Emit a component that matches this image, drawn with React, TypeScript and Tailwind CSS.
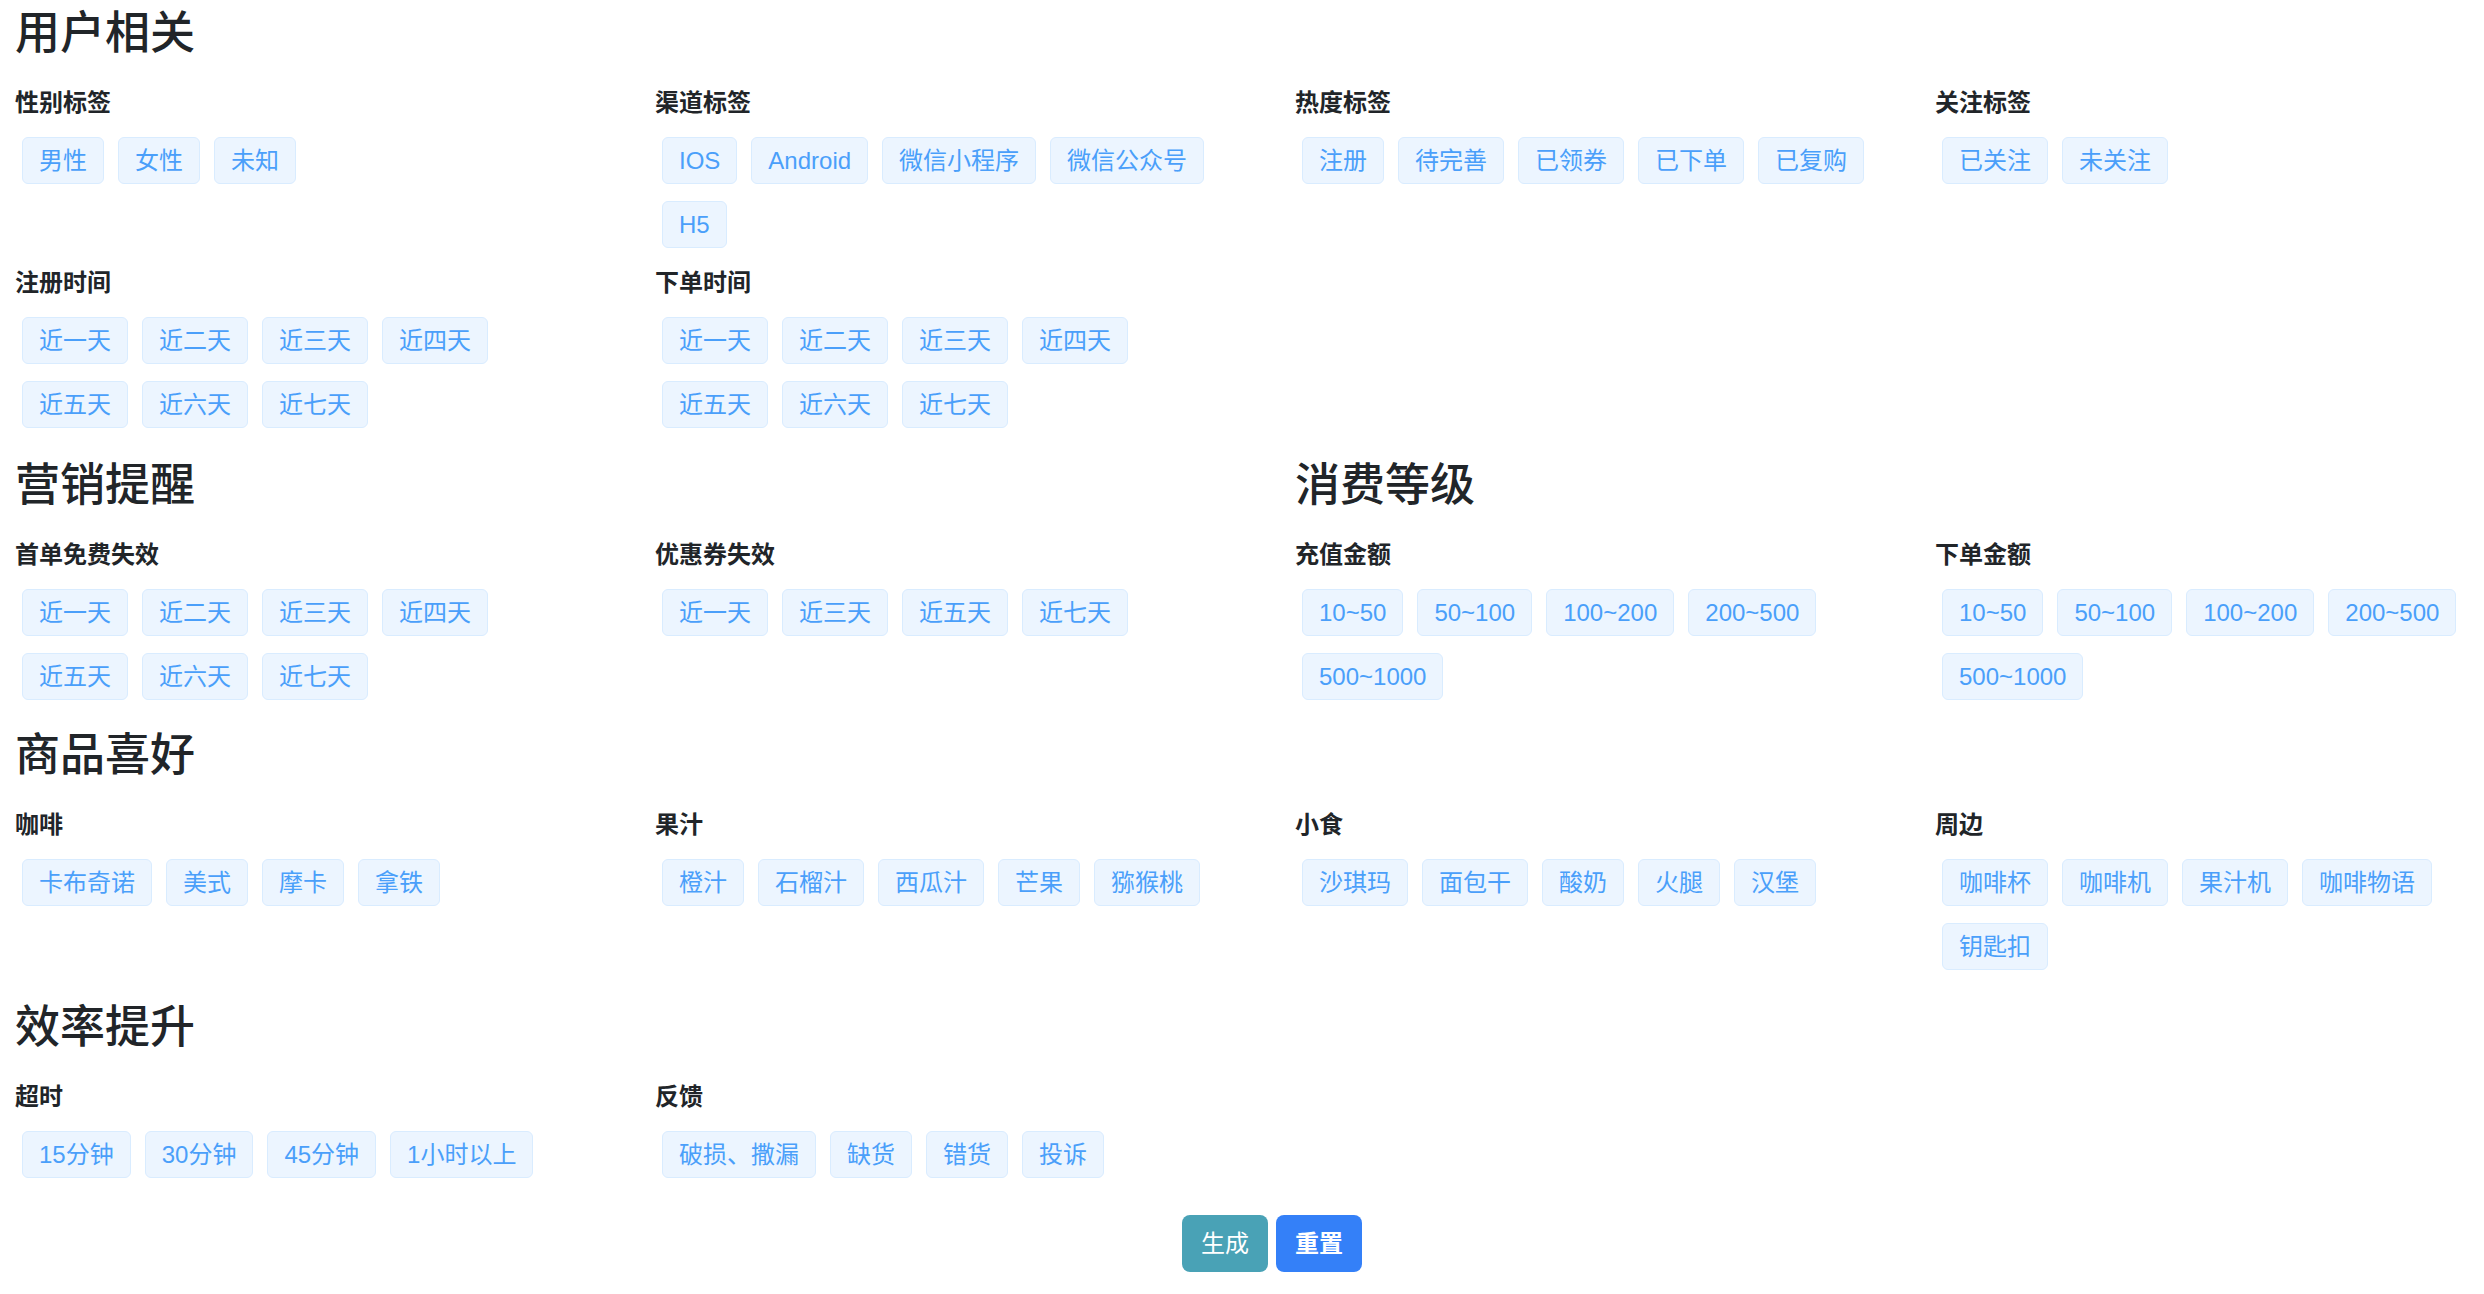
import React from "react";

const FONT = { fontFamily: '"Liberation Sans", "Noto Sans CJK SC", sans-serif' };

const days7 = ["近一天", "近二天", "近三天", "近四天", "近五天", "近六天", "近七天"];
const money = ["10~50", "50~100", "100~200", "200~500", "500~1000"];

type G = { label: string; items: string[] };

function Tag({ text }: { text: string }) {
  return (
    <div className="h-[47px] px-[16px] flex items-center rounded-[6px] border border-[#d9ecff] bg-[#ecf5ff] text-[#4a9ffa] text-[24px] whitespace-nowrap">
      {text}
    </div>
  );
}

function Group({ g }: { g: G }) {
  return (
    <div className="w-[640px] px-[15px] mb-[17px]">
      <div className="h-[36px] leading-[36px] mb-[16px] text-[24px] font-semibold text-[#212529]">{g.label}</div>
      <div className="flex flex-wrap gap-x-[14px] gap-y-[17px] pl-[7px] pr-[25px]">
        {g.items.map((t, i) => (
          <Tag key={i} text={t} />
        ))}
      </div>
    </div>
  );
}

function Title({ text, mt }: { text: string; mt: string }) {
  return (
    <div className={"px-[15px] h-[54px] leading-[54px] mb-[24px] text-[45px] font-medium text-[#212529] " + mt}>
      {text}
    </div>
  );
}

export default function App() {
  const s1: G[] = [
    { label: "性别标签", items: ["男性", "女性", "未知"] },
    { label: "渠道标签", items: ["IOS", "Android", "微信小程序", "微信公众号", "H5"] },
    { label: "热度标签", items: ["注册", "待完善", "已领券", "已下单", "已复购"] },
    { label: "关注标签", items: ["已关注", "未关注"] },
    { label: "注册时间", items: days7 },
    { label: "下单时间", items: days7 },
  ];
  const s2a: G[] = [
    { label: "首单免费失效", items: days7 },
    { label: "优惠券失效", items: ["近一天", "近三天", "近五天", "近七天"] },
  ];
  const s2b: G[] = [
    { label: "充值金额", items: money },
    { label: "下单金额", items: money },
  ];
  const s3: G[] = [
    { label: "咖啡", items: ["卡布奇诺", "美式", "摩卡", "拿铁"] },
    { label: "果汁", items: ["橙汁", "石榴汁", "西瓜汁", "芒果", "猕猴桃"] },
    { label: "小食", items: ["沙琪玛", "面包干", "酸奶", "火腿", "汉堡"] },
    { label: "周边", items: ["咖啡杯", "咖啡机", "果汁机", "咖啡物语", "钥匙扣"] },
  ];
  const s4: G[] = [
    { label: "超时", items: ["15分钟", "30分钟", "45分钟", "1小时以上"] },
    { label: "反馈", items: ["破损、撒漏", "缺货", "错货", "投诉"] },
  ];

  return (
    <div className="w-[2484px] h-[1294px] overflow-hidden bg-white pt-[7px]" style={FONT}>
      <Title text="用户相关" mt="" />
      <div className="grid grid-cols-[repeat(4,640px)] items-start">
        {s1.map((g, i) => (
          <Group key={i} g={g} />
        ))}
      </div>

      <div className="grid grid-cols-[repeat(2,1280px)] items-start">
        <div>
          <Title text="营销提醒" mt="mt-[14px]" />
          <div className="grid grid-cols-[repeat(2,640px)] items-start">
            {s2a.map((g, i) => (
              <Group key={i} g={g} />
            ))}
          </div>
        </div>
        <div>
          <Title text="消费等级" mt="mt-[14px]" />
          <div className="grid grid-cols-[repeat(2,640px)] items-start">
            {s2b.map((g, i) => (
              <Group key={i} g={g} />
            ))}
          </div>
        </div>
      </div>

      <Title text="商品喜好" mt="mt-[12px]" />
      <div className="grid grid-cols-[repeat(4,640px)] items-start">
        {s3.map((g, i) => (
          <Group key={i} g={g} />
        ))}
      </div>

      <Title text="效率提升" mt="mt-[14px]" />
      <div className="grid grid-cols-[repeat(4,640px)] items-start">
        {s4.map((g, i) => (
          <Group key={i} g={g} />
        ))}
      </div>

      <div className="mt-[20px] flex justify-center gap-[8px] pl-[60px]">
        <button className="w-[86px] h-[57px] rounded-[8px] bg-[#49a2b6] text-white text-[24px]">生成</button>
        <button className="w-[86px] h-[57px] rounded-[8px] bg-[#3480f8] text-white text-[24px] font-semibold">重置</button>
      </div>
    </div>
  );
}
